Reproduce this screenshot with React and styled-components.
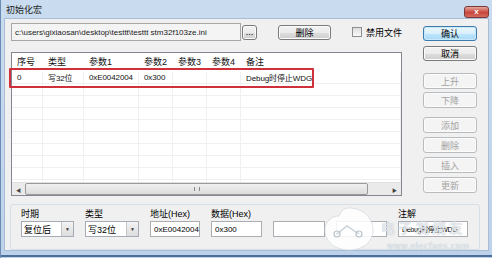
import React from "react";
import styled, { createGlobalStyle } from "styled-components";

const GlobalStyle = createGlobalStyle`
  html, body { margin: 0; padding: 0; background: #c3d7ec; }
  body { font-family: "Liberation Sans", "Noto Sans CJK SC", sans-serif; }
`;

const columns = [
  { key: "no", title: "序号", width: 31 },
  { key: "type", title: "类型", width: 41 },
  { key: "p1", title: "参数1", width: 55 },
  { key: "p2", title: "参数2", width: 34 },
  { key: "p3", title: "参数3", width: 34 },
  { key: "p4", title: "参数4", width: 34 },
  { key: "note", title: "备注", width: 160 },
];

const rows = [
  { no: "0", type: "写32位", p1: "0xE0042004", p2: "0x300", p3: "", p4: "", note: "Debug时停止WDG" },
];

const sideButtons = [
  { label: "上升", gap: 12 },
  { label: "下降", gap: 3 },
  { label: "添加", gap: 9 },
  { label: "删除", gap: 4 },
  { label: "插入", gap: 4 },
  { label: "更新", gap: 4 },
];

const Window = styled.div`
  position: relative;
  width: 492px;
  height: 258px;
  box-sizing: border-box;
  background: linear-gradient(#cadcef, #bdd2ea);
  border-left: 1px solid #6a8bb3;
  display: flex;
  flex-direction: column;
  overflow: hidden;
`;

const TitleBar = styled.div`
  height: 20px;
  display: flex;
  align-items: center;
  justify-content: space-between;
  padding: 0 3px 0 5px;
  font-size: 9px;
  color: #1b1b1b;
`;

const CloseButton = styled.div`
  width: 23px;
  height: 10px;
  margin-top: 5px;
  border: 1px solid #7a3a3a;
  border-radius: 3px;
  background: linear-gradient(#e6a79d, #c9463b 55%, #d46a5d);
  color: #fff;
  font-size: 8px;
  font-weight: bold;
  display: flex;
  align-items: center;
  justify-content: center;
`;

const Client = styled.div`
  flex: 1;
  margin: 0 3px 4px 3px;
  background: #f0f0f0;
  border: 1px solid #a9bed6;
  padding: 4px 6px 0 6px;
  display: flex;
  flex-direction: column;
  font-size: 9px;
  color: #000;
`;

const BottomEdge = styled.div`
  height: 2px;
  background: #4b6f98;
  margin-bottom: 1px;
`;

const Main = styled.div`
  display: flex;
  gap: 21px;
`;

const LeftPane = styled.div`
  width: 391px;
  display: flex;
  flex-direction: column;
  gap: 11px;
`;

const TopRow = styled.div`
  display: flex;
  align-items: center;
  height: 18px;
`;

const PathBox = styled.div`
  width: 229px;
  height: 16px;
  border: 1px solid #a7a7a7;
  background: #f4f4f4;
  display: flex;
  align-items: center;
  padding-left: 3px;
  font-size: 8px;
  color: #222;
  white-space: nowrap;
  overflow: hidden;
`;

const Button = styled.div`
  box-sizing: border-box;
  width: ${(p) => p.$w || 54}px;
  height: ${(p) => p.$h || 15}px;
  margin-left: ${(p) => p.$ml || 0}px;
  margin-top: ${(p) => p.$mt || 0}px;
  border: 1px solid ${(p) => (p.$default ? "#3d7bad" : p.$disabled ? "#b9bcbf" : "#7a7a7a")};
  border-radius: 3px;
  background: ${(p) =>
    p.$default
      ? "linear-gradient(#eaf6fd, #d9f0fc 50%, #bee6fd 51%, #a7d9f5)"
      : p.$disabled
      ? "#f4f4f4"
      : "linear-gradient(#f2f2f2, #ebebeb 50%, #dddddd 51%, #cfcfcf)"};
  box-shadow: ${(p) => (p.$default ? "inset 0 0 0 1px #c8e8fb" : "inset 0 0 0 1px #fbfbfb")};
  color: ${(p) => (p.$disabled ? "#a3a3a3" : "#000")};
  font-size: 9px;
  display: flex;
  align-items: center;
  justify-content: center;
  flex-shrink: 0;
`;

const CheckLabel = styled.label`
  display: flex;
  align-items: center;
  gap: 4px;
  margin-left: 21px;
  font-size: 9px;
  white-space: nowrap;
`;

const CheckBox = styled.span`
  width: 8px;
  height: 8px;
  border: 1px solid #8f8f8f;
  background: linear-gradient(#dcdcdc, #fafafa);
`;

const ListView = styled.div`
  position: relative;
  height: 142px;
  border: 1px solid #828790;
  background: #fff;
  display: flex;
  flex-direction: column;
`;

const HeaderRow = styled.div`
  display: flex;
  height: 17px;
  align-items: center;
`;

const Row = styled.div`
  display: flex;
  height: 12px;
  align-items: center;
  flex-shrink: 0;
`;

const Cell = styled.div`
  width: ${(p) => p.$w}px;
  box-sizing: border-box;
  height: 100%;
  padding-left: 5px;
  display: flex;
  align-items: center;
  white-space: nowrap;
  font-size: ${(p) => (p.$head ? 9 : 8)}px;
  letter-spacing: ${(p) => (p.$head ? 0 : -0.1)}px;
  color: #111;
  border-right: 1px solid ${(p) => (p.$grid ? "#f0f0f0" : "transparent")};
  border-bottom: 1px solid ${(p) => (p.$grid ? "#f0f0f0" : "transparent")};
`;

const Body = styled.div`
  flex: 1;
  overflow: hidden;
  display: flex;
  flex-direction: column;
  padding-top: 2px;
`;

const Highlight = styled.div`
  position: absolute;
  left: -3px;
  top: 15px;
  width: 301px;
  height: 16px;
  border: 2px solid #d0303a;
  border-radius: 1px;
`;

const ScrollBar = styled.div`
  height: 12px;
  display: flex;
  align-items: stretch;
  background: #eaeaea;
  border-top: 1px solid #e2e2e2;
`;

const Arrow = styled.div`
  width: 13px;
  display: flex;
  align-items: center;
  justify-content: center;
  font-size: 5px;
  color: #444;
`;

const Thumb = styled.div`
  width: 341px;
  border: 1px solid #9a9a9a;
  border-radius: 2px;
  background: linear-gradient(#f1f1f1, #dcdcdc);
  display: flex;
  align-items: center;
  justify-content: center;
  &::after {
    content: "";
    width: 4px;
    height: 4px;
    border-left: 1px solid #888;
    border-right: 1px solid #888;
  }
`;

const Track = styled.div`
  flex: 1;
`;

const SidePane = styled.div`
  display: flex;
  flex-direction: column;
  padding-top: 3px;
`;

const GroupBox = styled.div`
  margin: 8px 2px 0 -1px;
  height: 40px;
  border: 1px solid #d5dfe5;
  border-radius: 3px;
  display: flex;
  gap: 11px;
  padding: 4px 0 0 10px;
`;

const Field = styled.div`
  display: flex;
  flex-direction: column;
  gap: 2px;
  width: ${(p) => p.$w}px;
`;

const FieldLabel = styled.div`
  height: 10px;
  font-size: 9px;
  line-height: 10px;
  white-space: nowrap;
`;

const Combo = styled.div`
  height: 14px;
  border: 1px solid #a5acb5;
  background: #fff;
  display: flex;
  align-items: center;
  font-size: 9px;
`;

const ComboText = styled.div`
  flex: 1;
  padding-left: 2px;
`;

const ComboArrow = styled.div`
  width: 11px;
  height: 100%;
  border-left: 1px solid #c5c5c5;
  background: linear-gradient(#f3f3f3, #dcdcdc);
  display: flex;
  align-items: center;
  justify-content: center;
  font-size: 5px;
  color: #333;
`;

const TextInput = styled.div`
  height: 14px;
  border: 1px solid #abadb3;
  background: #fff;
  display: flex;
  align-items: center;
  padding-left: 3px;
  font-size: ${(p) => p.$fs || 8}px;
  letter-spacing: ${(p) => p.$ls || 0}px;
  white-space: nowrap;
  overflow: hidden;
`;

const Watermark = styled.div`
  position: absolute;
  left: 318px;
  top: 204px;
  width: 170px;
  height: 48px;
  pointer-events: none;
`;

const WatermarkText = styled.div`
  position: absolute;
  left: 68px;
  top: 38px;
  font-family: "DejaVu Sans", sans-serif;
  font-size: 8px;
  color: #e8eef3;
  text-shadow: 0 0 1px #9aa9b5;
  letter-spacing: 0.5px;
`;

const WatermarkTitle = styled.div`
  position: absolute;
  left: 62px;
  top: 13px;
  font-size: 14px;
  font-weight: bold;
  color: rgba(255, 255, 255, 0.6);
  text-shadow: 0 0 1px rgba(150, 165, 178, 0.7);
  letter-spacing: 3px;
`;

export default function App() {
  const bottomFields = [
    { label: "时期", w: 53, combo: "复位后" },
    { label: "类型", w: 54, combo: "写32位" },
    { label: "地址(Hex)", w: 50, value: "0xE0042004" },
    { label: "数据(Hex)", w: 51, value: "0x300" },
    { label: "", w: 52, value: "" },
    { label: "", w: 51, value: "" },
    { label: "注解", w: 70, value: "Debug时停止WDG", fs: 7, ls: -0.3 },
  ];

  return (
    <>
      <GlobalStyle />
      <Window>
        <TitleBar>
          <span>初始化宏</span>
          <CloseButton>x</CloseButton>
        </TitleBar>
        <Client>
          <Main>
            <LeftPane>
              <TopRow>
                <PathBox>c:\users\gixiaosan\desktop\testtt\testtt stm32f103ze.ini</PathBox>
                <Button $w={15} $h={15} $ml={1}>...</Button>
                <Button $w={53} $ml={21}>删除</Button>
                <CheckLabel>
                  <CheckBox />
                  禁用文件
                </CheckLabel>
              </TopRow>
              <ListView>
                <HeaderRow>
                  {columns.map((c) => (
                    <Cell key={c.key} $w={c.width} $head>
                      {c.title}
                    </Cell>
                  ))}
                </HeaderRow>
                <Body>
                  {Array.from({ length: 10 }).map((_, i) => (
                    <Row key={i}>
                      {columns.map((c) => (
                        <Cell key={c.key} $w={c.width} $grid>
                          {rows[i] ? rows[i][c.key] : ""}
                        </Cell>
                      ))}
                    </Row>
                  ))}
                </Body>
                <ScrollBar>
                  <Arrow>◀</Arrow>
                  <Thumb />
                  <Track />
                  <Arrow>▶</Arrow>
                </ScrollBar>
                <Highlight />
              </ListView>
            </LeftPane>
            <SidePane>
              <Button $default>确认</Button>
              <Button $mt={5}>取消</Button>
              {sideButtons.map((b) => (
                <Button key={b.label} $disabled $h={16} $mt={b.gap}>
                  {b.label}
                </Button>
              ))}
            </SidePane>
          </Main>
          <GroupBox>
            {bottomFields.map((f, i) => (
              <Field key={i} $w={f.w}>
                <FieldLabel>{f.label}</FieldLabel>
                {f.combo ? (
                  <Combo>
                    <ComboText>{f.combo}</ComboText>
                    <ComboArrow>▼</ComboArrow>
                  </Combo>
                ) : (
                  <TextInput $fs={f.fs} $ls={f.ls}>
                    {f.value}
                  </TextInput>
                )}
              </Field>
            ))}
          </GroupBox>
        </Client>
        <BottomEdge />
        <Watermark>
          <svg width="60" height="48" viewBox="0 0 60 48">
            <path
              d="M30 4 C44 4 54 14 54 26 C54 38 44 46 30 46 C16 46 6 38 6 26 C6 18 12 12 20 12 C22 6 26 4 30 4 Z"
              fill="rgba(255,255,255,0.85)"
              stroke="#c6d0d8"
              strokeWidth="0.6"
            />
            <path d="M18 30 L28 22 L40 30" fill="none" stroke="#c9d2d9" strokeWidth="1.5" />
            <circle cx="18" cy="30" r="3" fill="none" stroke="#b9c3cc" strokeWidth="1.2" />
            <circle cx="40" cy="30" r="3" fill="none" stroke="#b9c3cc" strokeWidth="1.2" />
          </svg>
          <WatermarkTitle>电子发烧友</WatermarkTitle>
          <WatermarkText>www.elecfans.com</WatermarkText>
        </Watermark>
      </Window>
    </>
  );
}
